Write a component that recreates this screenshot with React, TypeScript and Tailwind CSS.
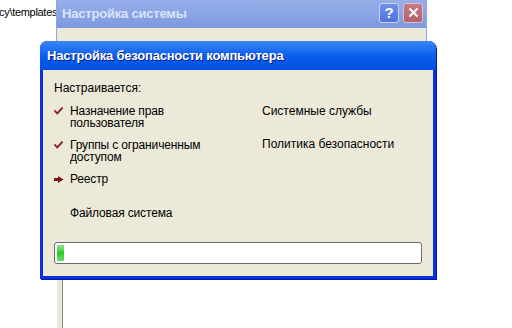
import React from 'react';

const Check: React.FC = () => (
    <svg width="9" height="8" viewBox="0 0 9 8" className="mt-[2px]">
        <path d="M1 4 L3.2 6.4 L8 1.2" fill="none" stroke="#8a1c22" strokeWidth="1.8" strokeLinecap="square" />
    </svg>
);

const Arrow: React.FC = () => (
    <svg width="10" height="7" viewBox="0 0 10 7" className="mt-[3px]">
        <rect x="0" y="2" width="5" height="3" fill="#7b1515" />
        <path d="M4 0 L9.5 3.5 L4 7 Z" fill="#7b1515" />
    </svg>
);

interface Step {
    label: string;
    state: 'done' | 'current' | 'pending';
}

const leftSteps: Step[] = [
    { label: 'Назначение прав пользователя', state: 'done' },
    { label: 'Группы с ограниченным доступом', state: 'done' },
    { label: 'Реестр', state: 'current' },
    { label: 'Файловая система', state: 'pending' },
];

const rightSteps: Step[] = [
    { label: 'Системные службы', state: 'pending' },
    { label: 'Политика безопасности', state: 'pending' },
];

const StepRow: React.FC<{ step: Step }> = ({ step }) => (
    <div className="flex h-[34px] items-start">
        <div className="w-[16px] shrink-0 flex justify-start">
            {step.state === 'done' && <Check />}
            {step.state === 'current' && <Arrow />}
        </div>
        <span className="w-[140px] leading-[12px] tracking-[-0.15px]">{step.label}</span>
    </div>
);

const App: React.FC = () => {
    return (
        <div className="relative w-[512px] h-[328px] bg-white overflow-hidden font-['Liberation_Sans',sans-serif] text-[12px] text-black">
            {/* path text behind the windows */}
            <span className="absolute left-[-1px] top-[4px] whitespace-nowrap text-[11px] tracking-[-0.3px]">cy\templates</span>

            {/* strip left of the background window under the dialog */}
            <div className="absolute left-[57px] top-[279px] w-[6px] h-[60px] bg-[#ebe8dc] border-r border-[#8a8780]" />

            {/* background window: Настройка системы */}
            <div className="absolute left-[56px] top-0 w-[371px] h-[42px] bg-[#ece9d8] border-x border-[#8fa6e4]">
                <div className="h-[28px] bg-gradient-to-b from-[#96aee8] via-[#8aa4e6] to-[#7e98de] flex items-center pl-[5px] pr-[3px]">
                    <span className="font-bold text-[13px] text-[#dbe3f8] tracking-[-0.2px]">Настройка системы</span>
                    <div className="ml-auto flex gap-[4px] mt-[-3px]">
                        <div className="w-[20px] h-[20px] rounded-[3px] border border-[#c6d3f4] bg-gradient-to-b from-[#6f90e6] to-[#4e73dc] flex items-center justify-center">
                            <span className="font-bold text-[15px] text-white leading-none">?</span>
                        </div>
                        <div className="w-[20px] h-[20px] rounded-[3px] border border-[#d8c0cc] bg-gradient-to-b from-[#c47984] to-[#b3626f] flex items-center justify-center">
                            <svg width="11" height="11" viewBox="0 0 11 11">
                                <path d="M1.5 1.5 L9.5 9.5 M9.5 1.5 L1.5 9.5" stroke="white" strokeWidth="2" />
                            </svg>
                        </div>
                    </div>
                </div>
            </div>

            {/* front dialog */}
            <div className="absolute left-[40px] top-[41px] w-[396px] h-[238px] flex flex-col rounded-t-[7px] bg-[#0831d9] shadow-[1px_1px_0_#001a9e]">
                <div className="h-[29px] shrink-0 rounded-t-[7px] bg-gradient-to-b from-[#3b86f7] via-[#0a5eee] to-[#0450e2] flex items-center pl-[7px]">
                    <span className="font-bold text-[13px] text-white [text-shadow:1px_1px_0_#0a1e78] tracking-[-0.2px] mt-[1px]">Настройка безопасности компьютера</span>
                </div>
                <div className="flex-1 mx-[3px] mb-[3px] bg-[#ece9d8] pl-[11px] pr-[11px] pt-[12px] flex flex-col">
                    <div className="leading-[13px]">Настраивается:</div>
                    <div className="mt-[10px] grid grid-cols-[208px_1fr]">
                        <div className="flex flex-col">
                            {leftSteps.map(s => (
                                <StepRow key={s.label} step={s} />
                            ))}
                        </div>
                        <div className="flex flex-col">
                            {rightSteps.map(s => (
                                <div key={s.label} className="h-[33px] leading-[12px]">{s.label}</div>
                            ))}
                        </div>
                    </div>
                    <div className="mt-[1px] w-[368px] h-[22px] rounded-[3px] border border-[#6b6b6b] bg-white p-[2px] flex">
                        <div className="w-[7px] h-full bg-gradient-to-b from-[#8de88d] via-[#20c820] to-[#6ddd6d]" />
                    </div>
                </div>
            </div>
        </div>
    );
};

export default App;
